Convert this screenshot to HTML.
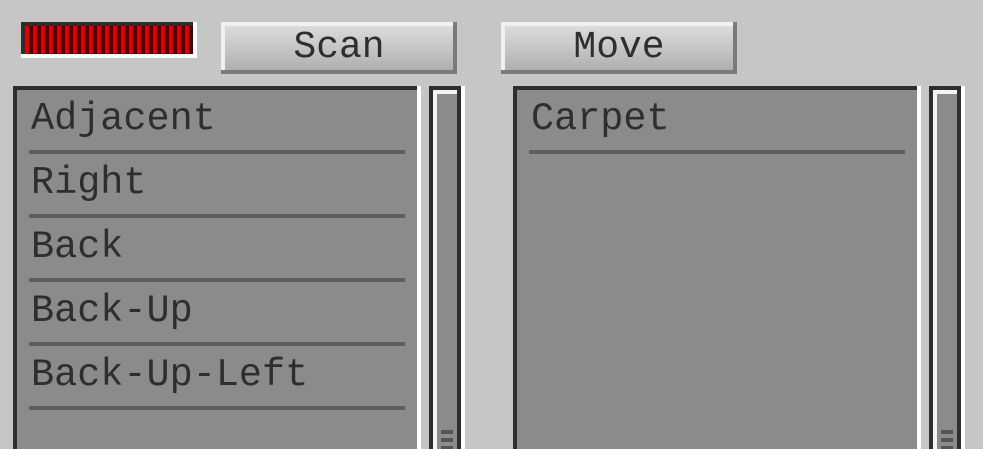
<!DOCTYPE html>
<html><head><style>
*{margin:0;padding:0;box-sizing:border-box}
html,body{width:983px;height:449px;overflow:hidden}
body{background:#c6c6c6;position:relative;font-family:"Liberation Mono",monospace;color:#2e2e2e}
.a{position:absolute}
.bar{left:21px;top:22px;width:176px;height:36px;background:#fff}
.bar .i{position:absolute;left:0;top:0;width:172px;height:32px;background:#2e2e2e}
.bar .b{position:absolute;left:4px;top:4px;width:168px;height:28px;background:repeating-linear-gradient(90deg,#e00000 0 4px,#4a0000 4px 8px)}
.btn{width:236px;height:52px;background:#7a7a7a}
.btn .i{position:absolute;left:0;top:0;width:232px;height:48px;background:#f0f0f0}
.btn .b{position:absolute;left:4px;top:4px;width:228px;height:44px;background:linear-gradient(#dcdcdc,#b0b0b0)}
.btn span{position:absolute;left:0;top:0;width:236px;height:52px;text-align:center;line-height:52px;font-size:38px}
.list{width:408px;height:363px;background:#fff;overflow:hidden}
.list .i{position:absolute;left:0;top:0;width:404px;height:363px;background:#2e2e2e}
.list .b{position:absolute;left:4px;top:4px;width:400px;height:363px;background:#8b8b8b}
.row{position:absolute;left:12px;width:376px;height:4px;background:#5e5e5e}
.txt{position:absolute;left:14px;font-size:38.5px;line-height:40px}
.sb{width:36px;height:363px;background:#fff;overflow:hidden}
.sb .i{position:absolute;left:0;top:0;width:32px;height:363px;background:#2e2e2e}
.sb .u{position:absolute;left:4px;top:4px;width:24px;height:363px;background:#f4f4f4}
.sb .b{position:absolute;left:8px;top:8px;width:20px;height:363px;background:#8b8b8b}
.g{position:absolute;left:12px;width:12px;height:4px;background:#555}
</style></head><body>
<div class="a bar"><div class="i"></div><div class="b"></div></div>
<div class="a btn" style="left:221px;top:22px"><div class="i"></div><div class="b"></div><span>Scan</span></div>
<div class="a btn" style="left:501px;top:22px"><div class="i"></div><div class="b"></div><span>Move</span></div>

<div class="a list" style="left:13px;top:86px"><div class="i"></div><div class="b">
<div class="txt" style="top:9px">Adjacent</div><div class="row" style="top:60px"></div>
<div class="txt" style="top:73px">Right</div><div class="row" style="top:124px"></div>
<div class="txt" style="top:137px">Back</div><div class="row" style="top:188px"></div>
<div class="txt" style="top:201px">Back-Up</div><div class="row" style="top:252px"></div>
<div class="txt" style="top:265px">Back-Up-Left</div><div class="row" style="top:316px"></div>
</div></div>
<div class="a sb" style="left:429px;top:86px"><div class="i"></div><div class="u"></div><div class="b"></div><div class="g" style="top:344px"></div><div class="g" style="top:352px"></div><div class="g" style="top:360px"></div></div>

<div class="a list" style="left:513px;top:86px"><div class="i"></div><div class="b">
<div class="txt" style="top:9px">Carpet</div><div class="row" style="top:60px"></div>
</div></div>
<div class="a sb" style="left:929px;top:86px"><div class="i"></div><div class="u"></div><div class="b"></div><div class="g" style="top:344px"></div><div class="g" style="top:352px"></div><div class="g" style="top:360px"></div></div>
</body></html>
